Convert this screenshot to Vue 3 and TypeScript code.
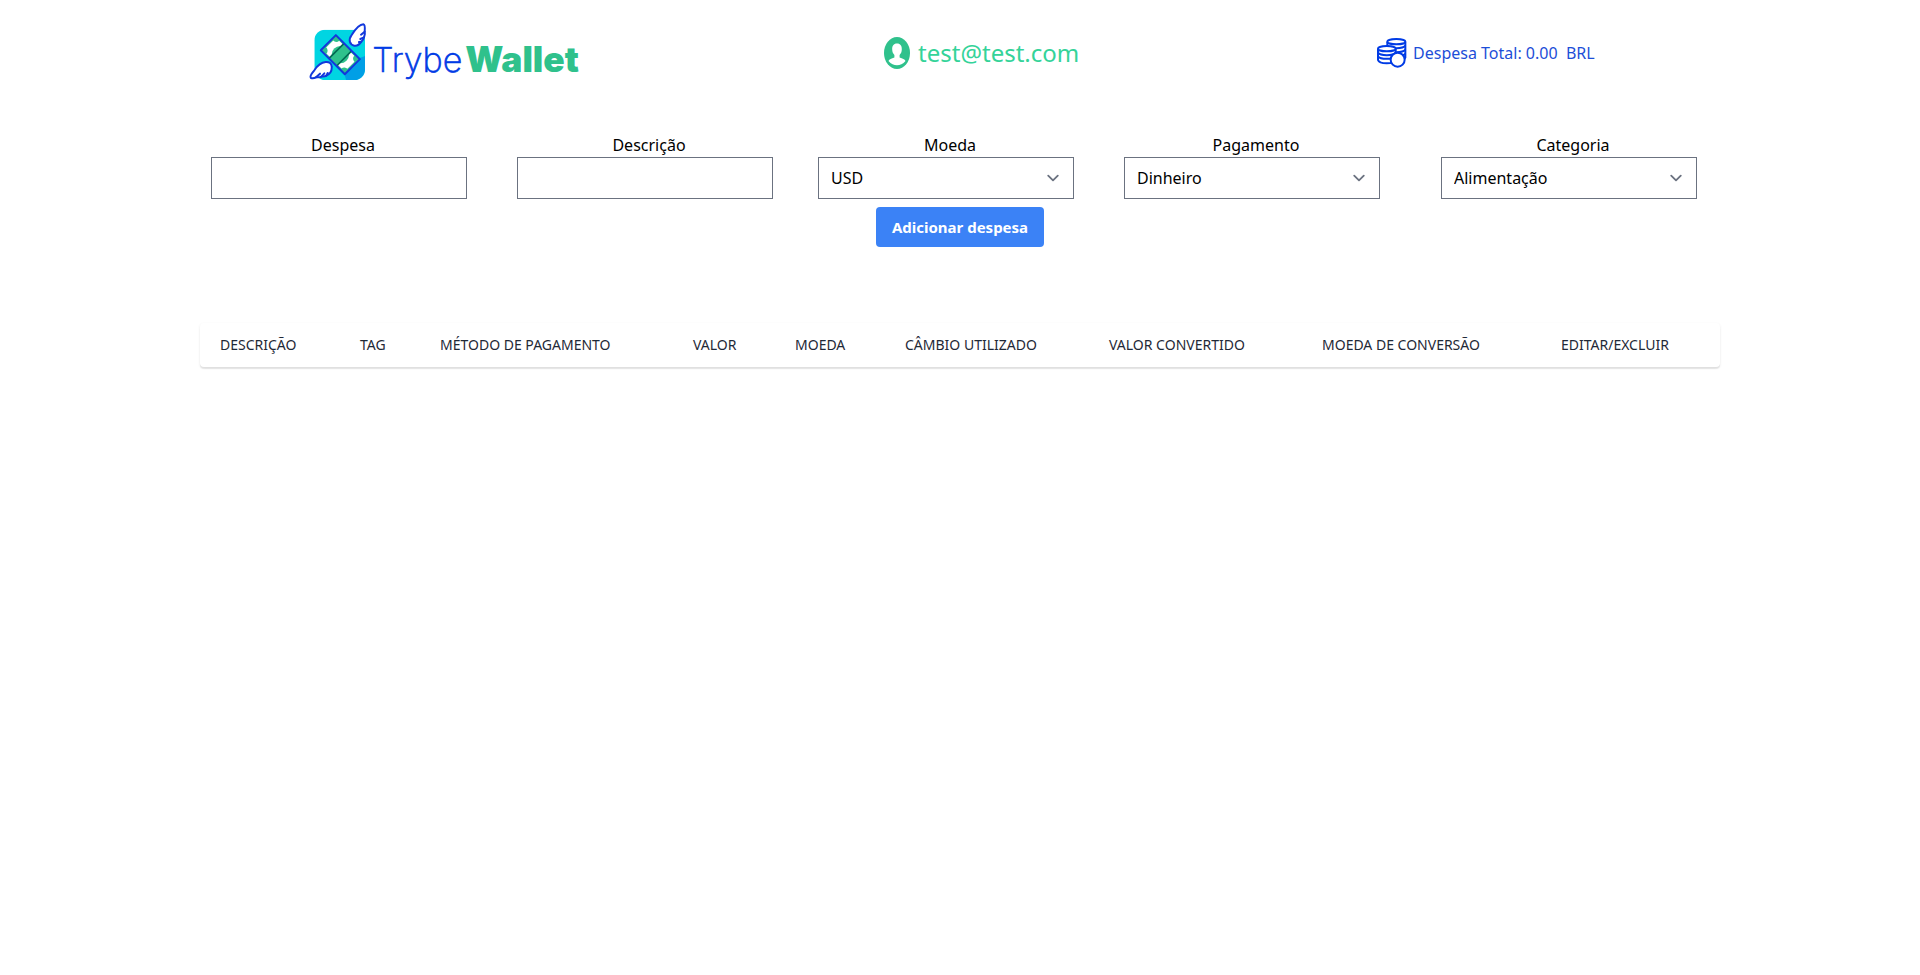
<script setup lang="ts">
import { computed, reactive } from 'vue'

interface Field {
  id: 'value' | 'description' | 'currency' | 'method' | 'tag'
  label: string
  options?: string[]
}

const fields: Field[] = [
  { id: 'value', label: 'Despesa' },
  { id: 'description', label: 'Descrição' },
  { id: 'currency', label: 'Moeda', options: ['USD', 'CAD', 'EUR', 'GBP', 'ARS', 'BTC'] },
  { id: 'method', label: 'Pagamento', options: ['Dinheiro', 'Cartão de crédito', 'Cartão de débito'] },
  { id: 'tag', label: 'Categoria', options: ['Alimentação', 'Lazer', 'Trabalho', 'Transporte', 'Saúde'] },
]

const form = reactive({
  value: '',
  description: '',
  currency: 'USD',
  method: 'Dinheiro',
  tag: 'Alimentação',
})

const headings: string[] = [
  'Descrição', 'Tag', 'Método de pagamento', 'Valor', 'Moeda',
  'Câmbio utilizado', 'Valor convertido', 'Moeda de conversão', 'Editar/Excluir',
]

const email = 'test@test.com'
const expenses = reactive<number[]>([])
const total = computed(() => expenses.reduce((sum, n) => sum + n, 0).toFixed(2))
</script>

<template>
  <div class="page">
    <header class="header">
      <svg class="logo" viewBox="12 16 816 180" role="img" aria-label="Trybe Wallet">
        <defs>
          <clipPath id="tile"><rect x="28" y="36" width="152" height="151" rx="32" /></clipPath>
        </defs>
        <g clip-path="url(#tile)">
          <rect x="28" y="36" width="152" height="151" fill="#00d5e2" />
          <path d="M165 120Q174 118 182 114V190H124L118 168Z" fill="#009fe6" />
        </g>
        <g transform="translate(106 111) rotate(45)">
          <rect x="-51" y="-32" width="102" height="64" fill="#2fc18c" />
          <path d="M-32 -27H32A12 12 0 0 0 45 -15V15A12 12 0 0 0 32 27H-32A12 12 0 0 0 -45 15V-15A12 12 0 0 0 -32 -27Z" fill="#fff" />
          <circle r="26" fill="#2fc18c" />
          <rect x="-16" y="-32" width="32" height="64" fill="#2fc18c" />
          <path d="M-16 -32V32M16 -32V32" stroke="#036b52" stroke-width="5" />
          <rect x="-51" y="-32" width="102" height="64" fill="none" stroke="#1238dc" stroke-width="6" stroke-linejoin="round" />
        </g>
        <g stroke="#1238dc" stroke-width="6" stroke-linecap="round" stroke-linejoin="round">
          <path d="M140 52C149 38 164 20 175 20C181 21 180 31 179 42C181 50 178 54 177 59C176 65 173 68 169 72C163 81 155 85 148 84C134 81 129 67 140 52Z" fill="#fff" />
          <path d="M179 42L168 51M177 59L166 64M169 72L162 73" fill="none" />
          <path d="M18 181C13 176 20 167 28 158C35 147 48 134 62 133C73 132 80 138 80 147C81 158 74 169 64 174C58 178 52 176 49 177C42 181 37 178 33 179C27 182 22 182 18 181Z" fill="#fff" />
          <path d="M33 179L45 168M49 177L58 167M64 174L68 166" fill="none" />
        </g>
        <text class="logo-thin" x="202" y="162">Trybe</text>
        <text class="logo-heavy" x="481" y="162">Wallet</text>
      </svg>

      <div class="user">
        <svg class="user-icon" viewBox="0 0 26 32" aria-hidden="true">
          <ellipse cx="13" cy="16" rx="13" ry="16" fill="#2fc18c" />
          <path d="M13 6.500C9.600 6.500 8 9 8.200 12.500C8.300 15 9 16.500 10.400 18V20.500C7.500 21.600 5.200 22.200 4.500 24C7 27.300 10 28.200 13 28.200S19 27.300 21.500 24C20.800 22.200 18.500 21.600 15.600 20.500V18C17 16.500 17.700 15 17.800 12.500C18 9 16.400 6.500 13 6.500Z" fill="#fff" />
        </svg>
        <span>{{ email }}</span>
      </div>

      <div class="total">
        <svg class="coins" viewBox="50 37 90 90" aria-hidden="true">
          <g fill="#fff" stroke="#003be5" stroke-width="6">
            <path d="M81 48V96C86 108 130 108 135 96V48" />
            <path d="M81 60C88 70 128 70 135 60M81 72C88 82 128 82 135 72M81 84C88 94 128 94 135 84" fill="none" />
            <ellipse cx="108" cy="48" rx="27" ry="8" />
            <path d="M53 69V103C57 116 101 116 106 103V69" />
            <path d="M53 81C60 91 99 91 106 81M53 92C60 102 99 102 106 92" fill="none" />
            <ellipse cx="79.500" cy="69" rx="26.500" ry="8" />
            <circle cx="112" cy="102" r="21" />
          </g>
        </svg>
        <span>Despesa Total: {{ total }}&nbsp; BRL</span>
      </div>
    </header>

    <main>
      <form class="form" @submit.prevent>
        <div class="fields">
          <div v-for="field in fields" :key="field.id" class="field">
            <label :for="field.id">{{ field.label }}</label>
            <div v-if="field.options" class="select">
              <select :id="field.id" v-model="form[field.id]">
                <option v-for="option in field.options" :key="option">{{ option }}</option>
              </select>
              <svg viewBox="0 0 20 20" aria-hidden="true">
                <path d="M6 8l4 4 4-4" />
              </svg>
            </div>
            <input v-else :id="field.id" v-model="form[field.id]" type="text">
          </div>
        </div>
        <button type="submit">Adicionar despesa</button>
      </form>

      <div class="card">
        <table class="expenses">
          <thead>
            <tr>
              <th v-for="heading in headings" :key="heading" scope="col">{{ heading }}</th>
            </tr>
          </thead>
        </table>
      </div>
    </main>
  </div>
</template>

<style>
body {
  margin: 0;
  background: #fff;
}
</style>

<style scoped>
.page {
  font-family: "Noto Sans", "Open Sans", sans-serif;
  font-size: 16px;
  line-height: 24px;
  color: #000;
}

.header {
  display: grid;
  grid-template-columns: 575fr 493fr 543fr;
  align-items: center;
  padding: 23px 0 22px 16.1%;
}

.logo {
  width: 272px;
  height: 60px;
}

.logo-thin {
  font: 200 102px Inter, sans-serif;
  fill: #003be5;
  stroke: #003be5;
  stroke-width: 2px;
}

.logo-heavy {
  font: 900 106px Inter, sans-serif;
  fill: #2fc18c;
}

.user {
  display: flex;
  align-items: center;
  gap: 8px;
  font-size: 24px;
  line-height: 30px;
  color: #34d399;
}

.user-icon {
  width: 26px;
  height: 32px;
}

.total {
  display: flex;
  align-items: center;
  gap: 6px;
  color: #1d4ed8;
  white-space: nowrap;
}

.coins {
  width: 30px;
  height: 30px;
}

main {
  width: calc(100% - 32px);
  max-width: 1520px;
  margin: 28px auto 0;
  padding-bottom: 32px;
}

.form {
  display: flex;
  flex-direction: column;
  align-items: center;
  gap: 8px;
}

.fields {
  display: grid;
  grid-template-columns: 306fr 301fr 306fr 317fr 279fr;
  width: 100%;
  box-sizing: border-box;
  padding-left: 11px;
}

.field {
  max-width: 256px;
}

.field label {
  display: block;
  padding-left: 8px;
  text-align: center;
}

.field input,
.field select {
  display: block;
  box-sizing: border-box;
  width: 100%;
  height: 42px;
  margin: 0;
  padding: 8px 12px;
  border: 1px solid #6b7280;
  border-radius: 0;
  background: #fff;
  color: inherit;
  font: inherit;
  appearance: none;
}

.select {
  display: grid;
  align-items: center;
}

.select > * {
  grid-area: 1 / 1;
}

.select svg {
  justify-self: end;
  width: 24px;
  height: 24px;
  margin-right: 9px;
  pointer-events: none;
  fill: none;
  stroke: #6b7280;
  stroke-width: 1.5;
  stroke-linecap: round;
  stroke-linejoin: round;
}

button {
  padding: 8px 16px;
  border: 0;
  border-radius: 4px;
  background: #3b82f6;
  color: #fff;
  font: inherit;
  font-size: 15px;
  font-weight: 700;
  cursor: pointer;
}

.card {
  margin-top: 76px;
  border-radius: 4px;
  background: #fff;
  box-shadow: 0 2px 1px rgba(0, 0, 0, 0.08), 0 1px 3px rgba(0, 0, 0, 0.08);
}

.expenses {
  width: 100%;
  table-layout: fixed;
  border-collapse: separate;
  border-spacing: 0;
}

.expenses th {
  padding: 12px 0 12px 20px;
  color: #1f2937;
  font-size: 14px;
  font-weight: 400;
  line-height: 20px;
  text-align: left;
  text-transform: uppercase;
  white-space: nowrap;
}

.expenses th:nth-child(1) { width: 120px; }
.expenses th:nth-child(2) { width: 60px; }
.expenses th:nth-child(3) { width: 233px; }
.expenses th:nth-child(4) { width: 82px; }
.expenses th:nth-child(5) { width: 90px; }
.expenses th:nth-child(6) { width: 184px; }
.expenses th:nth-child(7) { width: 193px; }
.expenses th:nth-child(8) { width: 219px; }
.expenses th:nth-child(9) { width: 159px; }
</style>
